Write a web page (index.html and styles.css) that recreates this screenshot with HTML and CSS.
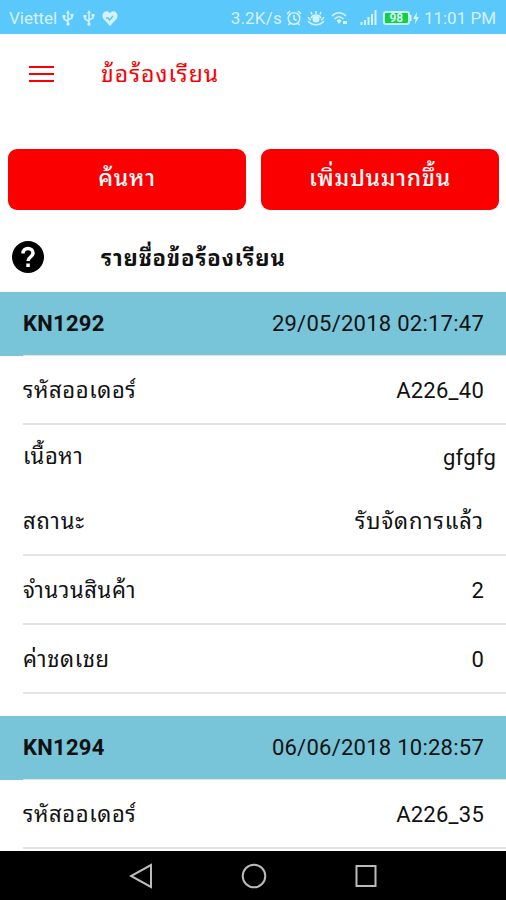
FILE: index.html
```
<!DOCTYPE html>
<html lang="th">
	<head>
		<meta charset="utf-8">
		<meta name="viewport" content="initial-scale=1,width=device-width">
		<title>ข้อร้องเรียน</title>
		<link rel="stylesheet" href="styles.css">
	</head>
	<body>
		<div class="status">
			<span class="carrier">Viettel</span>
			<svg class="usb" width="12" height="16" viewBox="0 0 12 16"><path d="M6 3v10M2 6v3l4 2.500M10 5v3L6 10"/><path class="fill" d="M6 0l2 3.500H4zM.5 5h3v2.500h-3zM8.500 4h3v2.500h-3z"/><circle class="fill" cx="6" cy="14" r="1.700"/></svg>
			<svg class="usb second" width="12" height="16" viewBox="0 0 12 16"><path d="M6 3v10M2 6v3l4 2.500M10 5v3L6 10"/><path class="fill" d="M6 0l2 3.500H4zM.5 5h3v2.500h-3zM8.500 4h3v2.500h-3z"/><circle class="fill" cx="6" cy="14" r="1.700"/></svg>
			<svg class="heart" width="16" height="15" viewBox="0 0 16 15"><path class="fill" d="M8 15L1.500 8C-2 3 4-2.500 8 2c4-4.500 10 1 6.500 6z"/><path class="pulse" d="M4 7h2l1.500 2L11 5"/></svg>
			<span class="speed">3.2K/s</span>
			<svg class="alarm" width="16" height="16" viewBox="0 0 16 16"><circle cx="8" cy="8.500" r="5.800"/><path d="M8 5v4l2.500 1.500M1 4l3-3M15 4l-3-3M4 13l-1.500 2M12 13l1.500 2"/></svg>
			<svg class="eye" width="18" height="16" viewBox="0 0 18 16"><path d="M1 7c1 2 2 2.500 3 3M17 7c-1 2-2 2.500-3 3M1 11c4 5 12 5 16 0M4 8c2-4 8-4 10 0M9 1v3M4 2l1 2.500M14 2l-1 2.500"/><circle class="fill" cx="9" cy="9" r="3.500"/></svg>
			<svg class="wifi" width="17" height="14" viewBox="0 0 17 14"><path d="M1 5c4-4.500 10-4.500 14 0M3.500 8c3-3 6-3 9 0"/><path class="fill" d="M5.500 9.500c2-1.700 3.500-1.500 5 0L8 13zM12 10h4v3h-4z"/></svg>
			<svg class="signal" width="17" height="16" viewBox="0 0 17 16"><path d="M1.500 12v3M5 10v5M8.500 7v8M12 4v11M15.500 0v15"/></svg>
			<span class="battery">98</span>
			<svg class="bolt" width="9" height="12" viewBox="0 0 9 12"><path class="fill" d="M0 3h1.500v6H0zM7 0L3 7h2.500L5 12l4-7H6.500z"/></svg>
			<span class="clock">11:01 PM</span>
		</div>
		<header class="navbar">
			<svg class="menu" width="28" height="18" viewBox="0 0 28 18"><path d="M1 2h25M1 9h25M1 16h25"/></svg>
			<h1>ข้อร้องเรียน</h1>
		</header>
		<main>
			<div class="buttons">
				<button>ค้นหา</button>
				<button>เพิ่มปนมากขึ้น</button>
			</div>
			<div class="caption">
				<svg class="help" width="32" height="32" viewBox="0 0 32 32"><circle cx="16" cy="16" r="16"/><path d="M11 12.500c0-7 10-6.500 10-.5 0 4-5 4-5 8"/><path class="dot" d="M14.300 22.500h3.500v3.500h-3.500z"/></svg>
				<h2>รายชื่อข้อร้องเรียน</h2>
			</div>
			<section>
				<div class="row head"><b>KN1292</b><span>29/05/2018 02:17:47</span></div>
				<div class="row"><span class="thai">รหัสออเดอร์</span><span>A226_40</span></div>
				<div class="row content"><span class="thai">เนื้อหา</span><span>gfgfg</span></div>
				<div class="row state"><span class="thai">สถานะ</span><span class="thai">รับจัดการแล้ว</span></div>
				<div class="row"><span class="thai">จำนวนสินค้า</span><span>2</span></div>
				<div class="row"><span class="thai">ค่าชดเชย</span><span>0</span></div>
			</section>
			<section>
				<div class="row head"><b>KN1294</b><span>06/06/2018 10:28:57</span></div>
				<div class="row"><span class="thai">รหัสออเดอร์</span><span>A226_35</span></div>
			</section>
		</main>
		<footer class="softkeys">
			<svg width="24" height="26" viewBox="0 0 24 26"><path d="M22 2v22L2 13z"/></svg>
			<svg width="26" height="26" viewBox="0 0 26 26"><circle cx="13" cy="13" r="11.300"/></svg>
			<svg width="22" height="24" viewBox="0 0 22 24"><path d="M1.500 2h19v20h-19z"/></svg>
		</footer>
	</body>
</html>
```
FILE: styles.css
```
:root{
	--red:#fb0000;
	--blue:#78c4d8;
	--line:#e3e3e3;
}
*{
	box-sizing:border-box;
}
body{
	background-color:#fff;
	color:#111;
	display:flex;
	flex-direction:column;
	font-family:Roboto,"Noto Sans Thai Looped","Noto Looped Thai",Loma,Garuda,Waree,Norasi,"Noto Serif Thai",sans-serif;
	font-size:22px;
	height:100vh;
	margin:0;
	overflow:hidden;
}
svg{
	fill:none;
	flex:none;
}
.status{
	align-items:center;
	background-color:#5ac8fb;
	color:#d5f2ff;
	display:flex;
	flex:none;
	font-size:17px;
	height:34px;
	padding:2px 10px 0 9px;
	white-space:nowrap;
}.status svg{
	stroke:currentColor;
	stroke-width:1.5;
}.status .fill{
	fill:currentColor;
	stroke:none;
}
.usb{
	margin-left:5px;
}.second{
	margin-left:9px;
}
.heart{
	margin-left:7px;
}.heart .pulse{
	stroke:#5ac8fb;
}
.speed{
	letter-spacing:.2px;
	margin-left:auto;
}
.alarm{
	margin-left:4px;
}
.eye{
	margin-left:5px;
}
.wifi{
	margin-left:6px;
}
.signal{
	margin-left:12px;
}.status .signal{
	stroke-width:2;
}
.battery{
	background-color:#13cf43;
	border:2px solid #c5f2e4;
	border-radius:3px;
	font-size:12px;
	font-weight:bold;
	height:14px;
	line-height:10px;
	margin-left:6px;
	text-align:center;
	width:27px;
}
.clock{
	margin-left:5px;
}
.navbar{
	align-items:center;
	color:var(--red);
	display:flex;
	flex:none;
	height:80px;
	padding-left:28px;
}
.menu{
	stroke:currentColor;
	stroke-width:2.2;
}
h1{
	font-size:23px;
	font-weight:normal;
	letter-spacing:1px;
	margin:0 0 0 45px;
	padding-bottom:5px;
}
main{
	flex:1;
	min-height:0;
	overflow:hidden;
	padding-top:35px;
}
.buttons{
	display:grid;
	gap:15px;
	grid-template-columns:1fr 1fr;
	padding:0 7px 0 8px;
}
button{
	background-color:var(--red);
	border:0;
	border-radius:9px;
	color:#fff;
	font-family:inherit;
	font-size:23px;
	font-weight:500;
	height:61px;
	letter-spacing:.7px;
	padding:0 0 8px;
}
.caption{
	align-items:center;
	display:flex;
	height:82px;
	padding:12px 0 0 12px;
}
.help{
	fill:#000;
}.help path{
	fill:none;
	stroke:#fff;
	stroke-width:3.5;
}.help .dot{
	fill:#fff;
	stroke:none;
}
h2{
	font-size:22px;
	letter-spacing:.9px;
	margin:0 0 0 57px;
	padding-bottom:2px;
}
section{
	margin-bottom:22px;
}
.row{
	align-items:center;
	border-bottom:2px solid var(--line);
	display:flex;
	height:69px;
	justify-content:space-between;
	letter-spacing:.25px;
	margin-left:23px;
	padding:2px 22px 0 0;
}.row.head{
	background-color:var(--blue);
	border:0;
	height:64px;
	margin:0;
	padding:0 22px 2px 23px;
}.head+.row{
	border-top:1px solid var(--line);
	height:70px;
	margin-top:-1px;
}.row.content{
	border:0;
	height:64px;
	padding:0 10px 0 0;
}.row.state{
	height:67px;
	padding-top:0;
}
.thai{
	letter-spacing:.6px;
	padding-bottom:6px;
}.state .thai{
	letter-spacing:.9px;
}
.softkeys{
	align-items:center;
	background-color:#000;
	display:flex;
	flex:none;
	gap:88px;
	height:49px;
	justify-content:center;
	stroke:#bbb;
	stroke-width:2;
}
```
